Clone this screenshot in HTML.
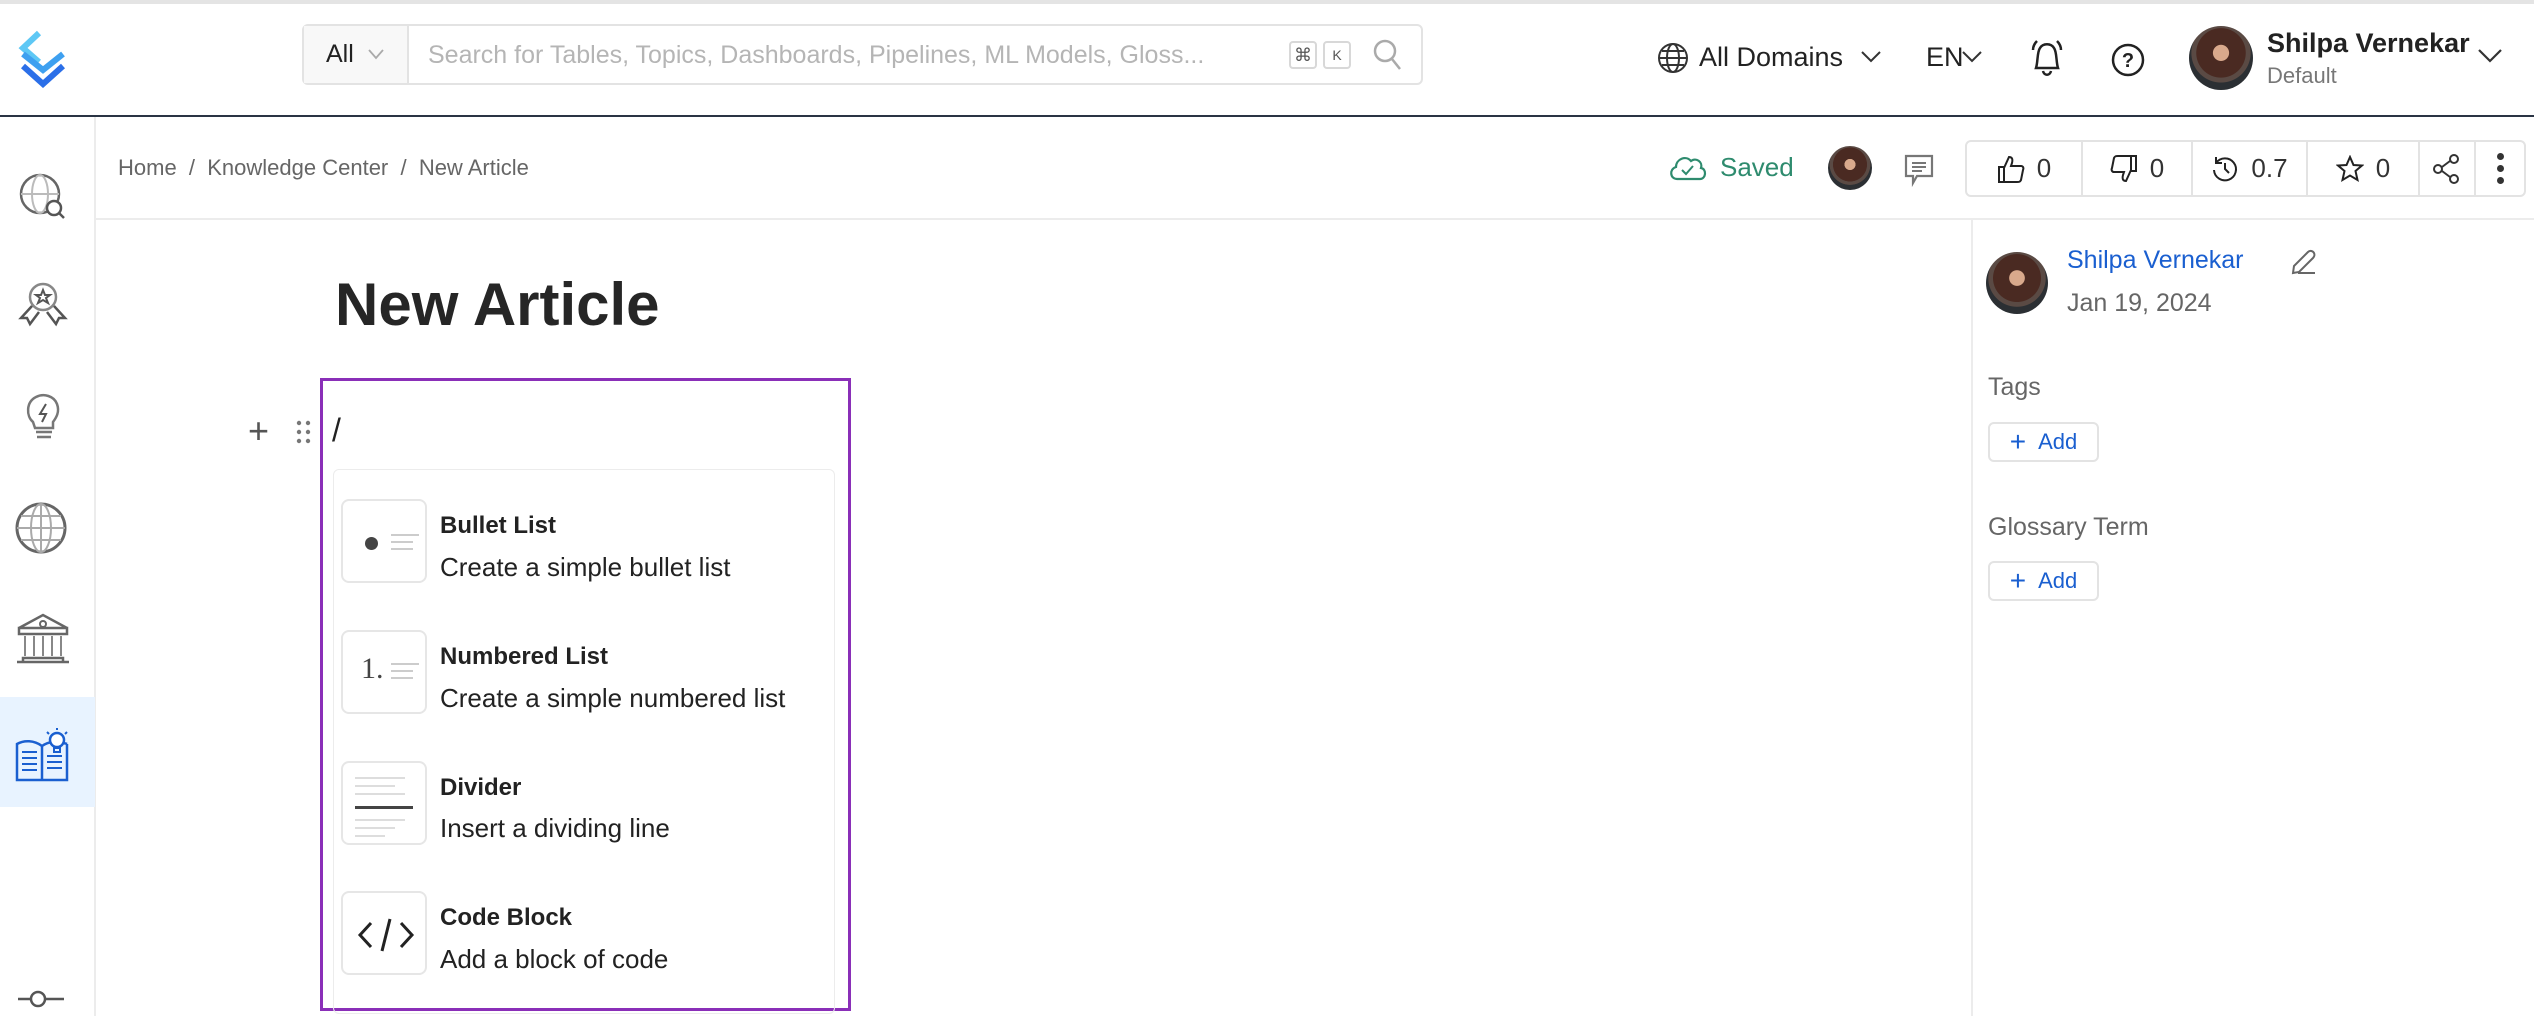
<!DOCTYPE html>
<html><head><meta charset="utf-8"><style>
*{margin:0;padding:0;box-sizing:border-box}
body{width:2534px;height:1016px;overflow:hidden;background:#fff;font-family:"Liberation Sans",sans-serif;color:#292929;position:relative}
.a{position:absolute}
.hdr{left:0;top:0;width:2534px;height:117px;border-top:4px solid #e4e4e4;border-bottom:2px solid #2a3444;background:#fff}
.side{left:0;top:117px;width:96px;height:899px;border-right:2px solid #ececec}
.t{position:absolute;white-space:nowrap}
.av{border-radius:50%;background:radial-gradient(circle at 50% 42%,#d9a98c 0 16%,#4a2a22 17% 50%,#5a4a44 51% 60%,#2b2f33 61%);}
svg{position:absolute}
.seg{position:absolute;top:0;height:100%;border-right:2px solid #e3e3e3;display:flex;align-items:center;justify-content:center;font-size:26px;color:#333;gap:12px}
.seg svg{position:static}
.item .ib{position:absolute;left:341px;width:86px;height:84px;border:2px solid #e6e6e6;border-radius:8px;background:#fff}
.ttl{font-weight:bold;font-size:24px;color:#222}
.dsc{font-size:26px;color:#222}
.addb{position:absolute;left:1988px;width:111px;height:40px;border:2px solid #e3e3e3;border-radius:6px;color:#1a5fd0;font-size:22px;display:flex;align-items:center;justify-content:center;gap:12px}
</style></head><body>
<div class="a hdr"></div>
<!-- logo -->
<svg style="left:17px;top:30px" width="56" height="58" viewBox="0 0 56 58"><path d="M22 3 L6 18 L22 32" fill="none" stroke="#5ec8f5" stroke-width="6"/><path d="M6 24 L26 40 L46 24" fill="none" stroke="#3ea0f0" stroke-width="6"/><path d="M6 36 L26 54 L46 36" fill="none" stroke="#2b6fe8" stroke-width="6"/></svg>
<!-- search -->
<div class="a" style="left:302px;top:24px;width:1121px;height:61px;border:2px solid #e3e3e3;border-radius:6px"></div>
<div class="a" style="left:304px;top:26px;width:105px;height:57px;background:#f8f8f8;border-right:2px solid #e3e3e3"></div>
<div class="t" style="left:326px;top:40px;font-size:25px;color:#222">All</div>
<svg style="left:367px;top:48px" width="18" height="12"><path d="M2 2 L9 10 L16 2" fill="none" stroke="#aaa" stroke-width="1.8"/></svg>
<div class="t" style="left:428px;top:41px;font-size:25px;color:#b5b5b5">Search for Tables, Topics, Dashboards, Pipelines, ML Models, Gloss...</div>
<div class="a" style="left:1289px;top:41px;width:28px;height:28px;border:2px solid #d8d8d8;border-radius:4px;font-size:18px;text-align:center;line-height:24px;color:#555">⌘</div>
<div class="a" style="left:1323px;top:41px;width:28px;height:28px;border:2px solid #d8d8d8;border-radius:4px;font-size:14px;text-align:center;line-height:24px;color:#555">K</div>
<svg style="left:1372px;top:38px" width="32" height="34"><circle cx="13" cy="13" r="10" fill="none" stroke="#aaa" stroke-width="2.5"/><path d="M20 21 L28 31" stroke="#aaa" stroke-width="2.5"/></svg>
<!-- right header -->
<svg style="left:1657px;top:42px" width="32" height="32"><circle cx="16" cy="16" r="14" fill="none" stroke="#333" stroke-width="2"/><ellipse cx="16" cy="16" rx="6" ry="14" fill="none" stroke="#333" stroke-width="2"/><path d="M2 16H30M5 9H27M5 23H27" stroke="#333" stroke-width="2"/></svg>
<div class="t" style="left:1699px;top:42px;font-size:27px;color:#222">All Domains</div>
<svg style="left:1860px;top:50px" width="22" height="14"><path d="M2 2 L11 11 L20 2" fill="none" stroke="#333" stroke-width="2"/></svg>
<div class="t" style="left:1926px;top:42px;font-size:27px;color:#222">EN</div>
<svg style="left:1961px;top:50px" width="22" height="14"><path d="M2 2 L11 11 L20 2" fill="none" stroke="#333" stroke-width="2"/></svg>
<svg style="left:2029px;top:38px" width="36" height="42"><path d="M7 30 C9 24 8 14 11 10 C14 5 22 5 25 10 C28 14 27 24 29 30 Z M14 33 C15 38 21 38 22 33 M4 12 C4 8 6 5 8 3 M32 12 C32 8 30 5 28 3" fill="none" stroke="#222" stroke-width="2.5"/></svg>
<svg style="left:2110px;top:42px" width="36" height="36"><circle cx="18" cy="18" r="15" fill="none" stroke="#222" stroke-width="2.5"/><text x="18" y="25" font-size="20" font-weight="bold" text-anchor="middle" font-family="Liberation Sans" fill="#222">?</text></svg>
<div class="a av" style="left:2189px;top:26px;width:64px;height:64px"></div>
<div class="t" style="left:2267px;top:28px;font-size:27px;font-weight:bold;color:#222">Shilpa Vernekar</div>
<div class="t" style="left:2267px;top:63px;font-size:22px;color:#777">Default</div>
<svg style="left:2477px;top:48px" width="26" height="16"><path d="M2 2 L13 13 L24 2" fill="none" stroke="#333" stroke-width="2.2"/></svg>

<!-- sidebar -->
<div class="a side"></div>
<div class="a" style="left:0;top:697px;width:95px;height:110px;background:#e8f3ff"></div>
<svg style="left:18px;top:172px" width="52" height="52"><circle cx="22" cy="22" r="19" fill="none" stroke="#666" stroke-width="2.5"/><ellipse cx="22" cy="22" rx="8" ry="19" fill="none" stroke="#bbb" stroke-width="2"/><path d="M3 22H41" stroke="#bbb" stroke-width="2"/><circle cx="36" cy="36" r="7" fill="#fff" stroke="#555" stroke-width="2.5"/><path d="M41 41 L46 46" stroke="#555" stroke-width="2.5"/></svg>
<svg style="left:17px;top:280px" width="52" height="52"><circle cx="26" cy="17" r="13" fill="none" stroke="#888" stroke-width="2.5"/><path d="M26 10 L28 15 L33 15 L29 18 L31 23 L26 20 L21 23 L23 18 L19 15 L24 15Z" fill="none" stroke="#555" stroke-width="2"/><path d="M15 26 L4 38 L10 38 L13 44 L22 32 M37 26 L48 38 L42 38 L39 44 L30 32" fill="none" stroke="#555" stroke-width="2.5"/></svg>
<svg style="left:24px;top:392px" width="40" height="52"><path d="M9 30 C2 24 2 10 12 5 C20 1 30 4 33 12 C36 20 32 26 29 30 L29 36 L11 36Z" fill="none" stroke="#777" stroke-width="2.5"/><path d="M22 12 L16 22 L22 22 L18 30" fill="none" stroke="#555" stroke-width="2"/><path d="M12 40H28M13 45H27" stroke="#777" stroke-width="2.5"/></svg>
<svg style="left:15px;top:502px" width="54" height="54"><circle cx="26" cy="26" r="24" fill="none" stroke="#666" stroke-width="3"/><ellipse cx="26" cy="26" rx="10" ry="24" fill="none" stroke="#aaa" stroke-width="2"/><path d="M2 26H50M6 14H46M6 38H46M26 2V50" stroke="#aaa" stroke-width="2"/></svg>
<svg style="left:15px;top:612px" width="56" height="52"><path d="M4 16 L28 3 L52 16 Z M4 16H52V22H4Z M8 46H48V50H8Z M2 50H54" fill="none" stroke="#666" stroke-width="2.5"/><circle cx="28" cy="12" r="3" fill="none" stroke="#666" stroke-width="2"/><path d="M10 24V44M19 24V44M28 24V44M37 24V44M46 24V44" stroke="#888" stroke-width="2"/></svg>
<svg style="left:14px;top:726px" width="58" height="58"><path d="M3 18 L3 54 L28 54 L28 20 C20 14 10 14 3 18 Z M53 18 L53 54 L28 54 M28 20 C34 16 38 16 40 17 M46 17 C49 17 51 17 53 18" fill="none" stroke="#1a5fd0" stroke-width="2.5"/><path d="M8 26H23M8 32H23M8 38H23M8 44H23M33 30H48M33 36H48M33 42H48" stroke="#1a5fd0" stroke-width="2"/><circle cx="43" cy="14" r="7" fill="#fff" stroke="#1a5fd0" stroke-width="2.5"/><path d="M40 22H46V26H40Z M43 2V4 M33 6L35 8 M53 6L51 8" fill="none" stroke="#1a5fd0" stroke-width="2"/></svg>
<svg style="left:16px;top:988px" width="50" height="28"><path d="M2 11H14M30 11H48" stroke="#555" stroke-width="2.5"/><circle cx="22" cy="11" r="7" fill="none" stroke="#555" stroke-width="2.5"/></svg>

<!-- breadcrumb row -->
<div class="t" style="left:118px;top:155px;font-size:22px;color:#666">Home &nbsp;/&nbsp; Knowledge Center &nbsp;/&nbsp; New Article</div>
<div class="a" style="left:96px;top:218px;width:2438px;height:2px;background:#ececec"></div>
<svg style="left:1668px;top:152px" width="40" height="30"><path d="M9 27 C2 27 1 17 8 15 C8 7 18 3 23 9 C28 5 35 10 33 16 C39 17 38 27 32 27 Z" fill="none" stroke="#2e8b6e" stroke-width="2.2"/><path d="M14 18 L18 22 L25 14" fill="none" stroke="#2e8b6e" stroke-width="2"/></svg>
<div class="t" style="left:1720px;top:152px;font-size:26px;color:#2e8b6e">Saved</div>
<div class="a av" style="left:1828px;top:146px;width:44px;height:44px"></div>
<svg style="left:1903px;top:153px" width="32" height="34"><path d="M3 3H29V23H14L10 30V23H3Z" fill="none" stroke="#777" stroke-width="2.2"/><path d="M9 10H23M9 14H23M9 18H19" stroke="#777" stroke-width="2"/></svg>
<div class="a" style="left:1965px;top:140px;width:561px;height:57px;border:2px solid #e3e3e3;border-radius:6px">
 <div class="seg" style="left:0;width:116px"><svg width="28" height="30" viewBox="0 0 28 30"><path d="M2 13H7V28H2Z M7 14 L12 3 C15 3 16 5 15 9 L14 12 H24 C26 12 27 14 26 16 L24 26 C23 28 22 28 20 28 H7" fill="none" stroke="#222" stroke-width="2"/></svg>0</div>
 <div class="seg" style="left:116px;width:110px"><svg width="28" height="30" viewBox="0 0 28 30"><path d="M26 17H21V2H26Z M21 16 L16 27 C13 27 12 25 13 21 L14 18 H4 C2 18 1 16 2 14 L4 4 C5 2 6 2 8 2 H21" fill="none" stroke="#222" stroke-width="2"/></svg>0</div>
 <div class="seg" style="left:226px;width:115px"><svg width="28" height="28" viewBox="0 0 28 28"><path d="M5 8 A11 11 0 1 1 3 15 M5 2 V8 H11 M14 8 V14 L18 18" fill="none" stroke="#222" stroke-width="2"/></svg>0.7</div>
 <div class="seg" style="left:341px;width:112px"><svg width="28" height="28" viewBox="0 0 28 28"><path d="M14 2 L17.5 10 L26 10.5 L19.5 16 L21.5 25 L14 20.5 L6.5 25 L8.5 16 L2 10.5 L10.5 10 Z" fill="none" stroke="#222" stroke-width="2"/></svg>0</div>
 <div class="seg" style="left:453px;width:56px"><svg width="30" height="32"><circle cx="22" cy="6" r="4" fill="none" stroke="#333" stroke-width="2"/><circle cx="6" cy="16" r="4" fill="none" stroke="#333" stroke-width="2"/><circle cx="22" cy="26" r="4" fill="none" stroke="#333" stroke-width="2"/><path d="M10 14L18 8M10 18L18 24" stroke="#333" stroke-width="2"/></svg></div>
 <div class="seg" style="left:509px;width:48px;border:none;flex-direction:column;gap:5px"><i style="width:7px;height:7px;border-radius:50%;background:#333"></i><i style="width:7px;height:7px;border-radius:50%;background:#333"></i><i style="width:7px;height:7px;border-radius:50%;background:#333"></i></div>
</div>

<!-- right panel -->
<div class="a" style="left:1971px;top:218px;width:2px;height:798px;background:#ececec"></div>
<div class="a av" style="left:1986px;top:252px;width:62px;height:62px"></div>
<div class="t" style="left:2067px;top:246px;font-size:25px;color:#1a5fd0">Shilpa Vernekar</div>
<svg style="left:2290px;top:248px" width="28" height="28"><path d="M3 25 L4 18 L18 4 C20 2 23 3 24 5 C25 7 24 9 23 10 L9 24 Z M8 25H25" fill="none" stroke="#666" stroke-width="2"/></svg>
<div class="t" style="left:2067px;top:289px;font-size:25px;color:#666">Jan 19, 2024</div>
<div class="t" style="left:1988px;top:373px;font-size:25px;color:#666">Tags</div>
<div class="addb" style="top:422px"><span style="font-size:28px">+</span>Add</div>
<div class="t" style="left:1988px;top:513px;font-size:25px;color:#666">Glossary Term</div>
<div class="addb" style="top:561px"><span style="font-size:28px">+</span>Add</div>

<!-- editor -->
<div class="t" style="left:335px;top:270px;font-size:60px;font-weight:bold;color:#262626">New Article</div>
<div class="a" style="left:320px;top:378px;width:531px;height:633px;border:3px solid #8a2fb8"></div>
<div class="t" style="left:248px;top:410px;font-size:36px;color:#555">+</div>
<svg style="left:296px;top:420px" width="16" height="24"><g fill="#777"><circle cx="3" cy="3" r="2.2"/><circle cx="12" cy="3" r="2.2"/><circle cx="3" cy="12" r="2.2"/><circle cx="12" cy="12" r="2.2"/><circle cx="3" cy="21" r="2.2"/><circle cx="12" cy="21" r="2.2"/></g></svg>
<div class="t" style="left:332px;top:412px;font-size:32px;color:#222">/</div>
<div class="a" style="left:333px;top:469px;width:502px;height:545px;border:1px solid #ececec;border-radius:6px"></div>

<div class="item">
 <div class="ib" style="top:499px"><i class="a" style="left:22px;top:36px;width:13px;height:13px;border-radius:50%;background:#444"></i><i class="a" style="left:48px;top:33px;width:28px;height:2px;background:#ccc"></i><i class="a" style="left:48px;top:40px;width:22px;height:2px;background:#ccc"></i><i class="a" style="left:48px;top:47px;width:22px;height:2px;background:#ccc"></i></div>
 <div class="t ttl" style="left:440px;top:512px">Bullet List</div>
 <div class="t dsc" style="left:440px;top:552px">Create a simple bullet list</div>
</div>
<div class="item">
 <div class="ib" style="top:630px"><span class="a" style="left:18px;top:20px;font-size:30px;color:#444;font-family:'Liberation Serif',serif">1.</span><i class="a" style="left:48px;top:31px;width:28px;height:2px;background:#ccc"></i><i class="a" style="left:48px;top:38px;width:22px;height:2px;background:#ccc"></i><i class="a" style="left:48px;top:45px;width:22px;height:2px;background:#ccc"></i></div>
 <div class="t ttl" style="left:440px;top:643px">Numbered List</div>
 <div class="t dsc" style="left:440px;top:683px">Create a simple numbered list</div>
</div>
<div class="item">
 <div class="ib" style="top:761px"><i class="a" style="left:12px;top:14px;width:50px;height:2px;background:#ddd"></i><i class="a" style="left:12px;top:22px;width:40px;height:2px;background:#ddd"></i><i class="a" style="left:12px;top:30px;width:50px;height:2px;background:#ddd"></i><i class="a" style="left:12px;top:43px;width:58px;height:3px;background:#444"></i><i class="a" style="left:12px;top:56px;width:50px;height:2px;background:#ddd"></i><i class="a" style="left:12px;top:64px;width:40px;height:2px;background:#ddd"></i><i class="a" style="left:12px;top:72px;width:30px;height:2px;background:#ddd"></i></div>
 <div class="t ttl" style="left:440px;top:774px">Divider</div>
 <div class="t dsc" style="left:440px;top:813px">Insert a dividing line</div>
</div>
<div class="item">
 <div class="ib" style="top:891px"><svg style="left:14px;top:22px" width="58" height="40"><path d="M14 8 L3 20 L14 32 M44 8 L55 20 L44 32 M33 4 L25 36" fill="none" stroke="#222" stroke-width="3"/></svg></div>
 <div class="t ttl" style="left:440px;top:904px">Code Block</div>
 <div class="t dsc" style="left:440px;top:944px">Add a block of code</div>
</div>
</body></html>
